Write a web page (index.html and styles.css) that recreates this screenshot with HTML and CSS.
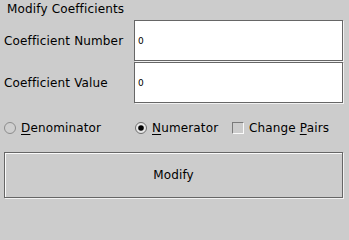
FILE: index.html
```html
<!DOCTYPE html>
<html>
<head>
<meta charset="utf-8">
<link rel="stylesheet" href="styles.css">
</head>
<body>
<div class="panel">
  <div class="title">Modify Coefficients</div>
  <div class="fields">
    <div class="label">Coefficient Number</div>
    <div class="field">0</div>
    <div class="label">Coefficient Value</div>
    <div class="field">0</div>
  </div>
  <div class="options">
    <div class="option">
      <svg class="radio" width="12" height="12" viewBox="0 0 12 12"><circle cx="6" cy="6" r="5.5" fill="#cfcfcf" stroke="#8c8c8c" stroke-width="1"/></svg>
      <span><u>D</u>enominator</span>
    </div>
    <div class="option">
      <svg class="radio" width="12" height="12" viewBox="0 0 12 12"><circle cx="6" cy="6" r="5.5" fill="#e6e6e6" stroke="#6e6e6e" stroke-width="1"/><circle cx="6" cy="6" r="2.8" fill="#000"/></svg>
      <span><u>N</u>umerator</span>
    </div>
    <div class="option">
      <span class="check"></span>
      <span>Change <u>P</u>airs</span>
    </div>
  </div>
  <button class="button">Modify</button>
</div>
</body>
</html>
```
FILE: styles.css
```css
html, body {
  margin: 0;
  padding: 0;
}
body {
  background: #cccccc;
  font-family: "DejaVu Sans", "Noto Sans", sans-serif;
  font-size: 12px;
  letter-spacing: 0.15px;
  color: #000;
  width: 349px;
  height: 202px;
  overflow: hidden;
}
.panel {
  padding-top: 2px;
}
.title {
  margin-left: 7px;
  line-height: 14px;
  height: 14px;
}
.fields {
  margin-top: 4px;
  display: grid;
  grid-template-columns: 134px 209px;
  row-gap: 1px;
}
.label {
  padding-left: 4px;
  align-self: center;
  line-height: 14px;
}
.field {
  height: 41px;
  box-sizing: border-box;
  border: 1px solid #666;
  box-shadow: 1px 1px 0 #f2f2f2;
  background: #fff;
  font-size: 9px;
  display: flex;
  align-items: center;
  padding-left: 3px;
}
.options {
  height: 48px;
  margin-top: 1px;
  padding-left: 4px;
  display: grid;
  grid-template-columns: 131px 97px auto;
  align-items: center;
}
.option {
  display: flex;
  align-items: center;
  gap: 5px;
  line-height: 14px;
}
.radio {
  display: block;
  flex: none;
}
.check {
  display: block;
  flex: none;
  width: 12px;
  height: 12px;
  box-sizing: border-box;
  border: 1px solid;
  border-color: #7a7a7a #fafafa #fafafa #7a7a7a;
  background: #cccccc;
}
u {
  text-decoration: underline;
  text-underline-offset: 2px;
  text-decoration-thickness: 1px;
}
.button {
  display: flex;
  align-items: center;
  justify-content: center;
  margin: 0 0 0 4px;
  padding: 0;
  width: 339px;
  height: 46px;
  box-sizing: border-box;
  border: 1px solid #666;
  border-radius: 0;
  box-shadow: inset 1px 1px 0 #fafafa, 1px 1px 0 #f2f2f2;
  background: #cccccc;
  font-family: inherit;
  font-size: 12px;
  letter-spacing: 0.15px;
  color: #000;
}
```
